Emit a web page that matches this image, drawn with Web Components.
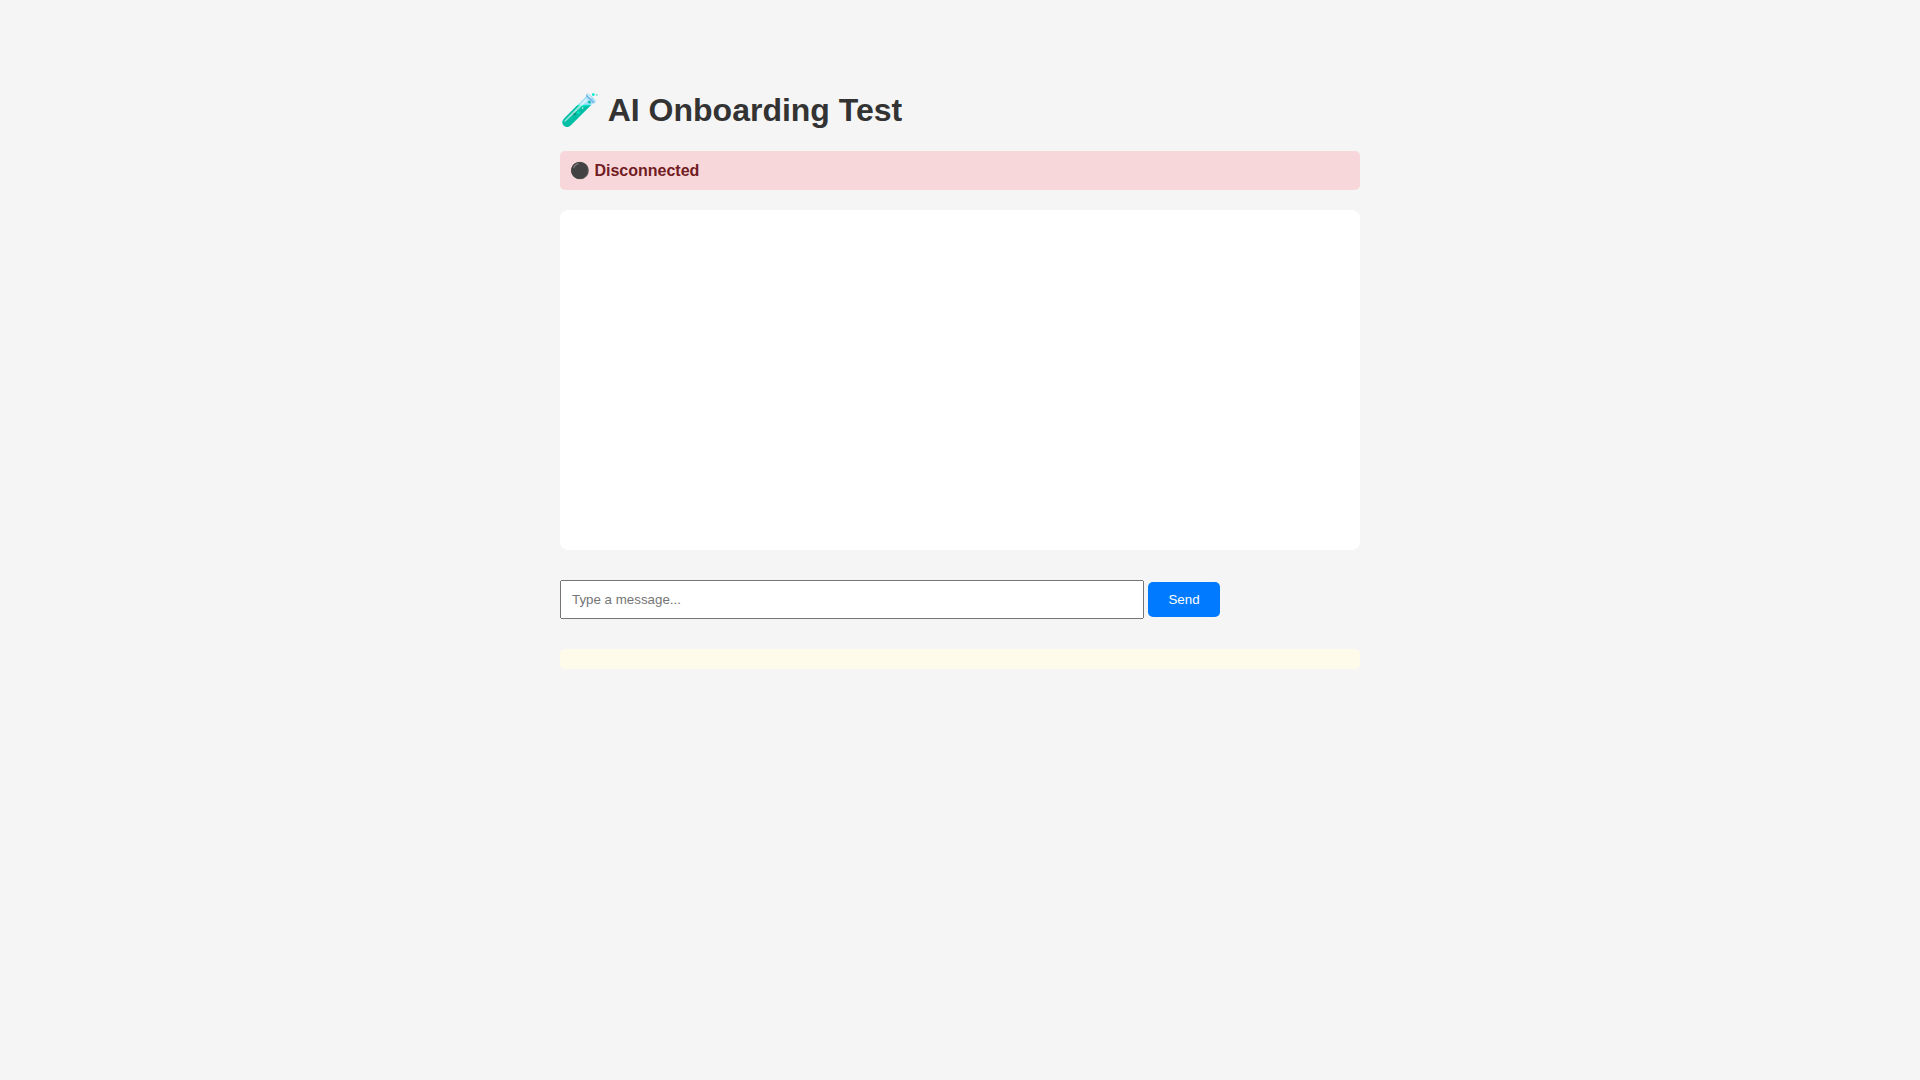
<!DOCTYPE html>
<html lang="en">
<head>
<meta charset="UTF-8">
<title>AI Onboarding Test</title>
<style>
  body {
    font-family: "Liberation Sans", Arial, sans-serif;
    max-width: 800px;
    margin: 50px auto;
    padding: 20px;
    background: #f5f5f5;
  }
</style>
</head>
<body>
<onboarding-test></onboarding-test>

<script>
class ConnectionStatus extends HTMLElement {
  static get observedAttributes() {
    return ['state'];
  }

  constructor() {
    super();
    this.attachShadow({ mode: 'open' });
    this.shadowRoot.innerHTML = `
      <style>
        :host {
          display: block;
          padding: 10px;
          margin: 20px 0;
          border-radius: 5px;
          font-weight: bold;
          background: #f8d7da;
          color: #721c24;
        }
        :host([state="connected"]) {
          background: #d4edda;
          color: #155724;
        }
      </style>
      <span role="status"></span>
    `;
    this._label = this.shadowRoot.querySelector('span');
  }

  attributeChangedCallback(name, oldVal, newVal) {
    this._label.textContent = newVal === 'connected' ? '🟢 Connected' : '⚫ Disconnected';
  }
}

class ChatLog extends HTMLElement {
  constructor() {
    super();
    this.attachShadow({ mode: 'open' });
    this.shadowRoot.innerHTML = `
      <style>
        :host {
          display: block;
          min-height: 300px;
          max-height: 500px;
          padding: 20px;
          margin: 20px 0;
          border-radius: 8px;
          background: white;
          overflow-y: auto;
        }
      </style>
      <slot></slot>
    `;
  }
}

class MessageForm extends HTMLElement {
  constructor() {
    super();
    this.attachShadow({ mode: 'open' });
    this.shadowRoot.innerHTML = `
      <style>
        :host {
          display: block;
          margin: 30px 0;
        }
        input {
          width: 70%;
          padding: 10px;
          font-family: inherit;
        }
        button {
          padding: 10px 20px;
          border: none;
          border-radius: 5px;
          background: #007bff;
          color: white;
          font-family: inherit;
          cursor: pointer;
        }
        button:hover {
          background: #0056b3;
        }
      </style>
      <form>
        <input type="text" placeholder="Type a message..." aria-label="Message">
        <button type="submit">Send</button>
      </form>
    `;
    this._input = this.shadowRoot.querySelector('input');
  }

  connectedCallback() {
    this.shadowRoot.querySelector('form').addEventListener('submit', (e) => {
      e.preventDefault();
      const text = this._input.value.trim();
      if (!text) return;
      this.dispatchEvent(new CustomEvent('send', { detail: text }));
      this._input.value = '';
    });
  }
}

class DebugPanel extends HTMLElement {
  constructor() {
    super();
    this.attachShadow({ mode: 'open' });
    this.shadowRoot.innerHTML = `
      <style>
        :host {
          display: block;
          padding: 10px;
          border-radius: 5px;
          background: #fffbea;
          font-size: 12px;
        }
      </style>
      <slot></slot>
    `;
  }
}

class OnboardingTest extends HTMLElement {
  constructor() {
    super();
    this.attachShadow({ mode: 'open' });
    this.shadowRoot.innerHTML = `
      <style>
        :host {
          display: block;
        }
        h1 {
          color: #333;
        }
      </style>
      <h1>🧪 AI Onboarding Test</h1>
      <connection-status state="disconnected"></connection-status>
      <chat-log></chat-log>
      <message-form></message-form>
      <debug-panel></debug-panel>
    `;
  }

  connectedCallback() {
    const log = this.shadowRoot.querySelector('chat-log');
    this.shadowRoot.querySelector('message-form').addEventListener('send', (e) => {
      const line = document.createElement('p');
      line.textContent = e.detail;
      log.appendChild(line);
    });
  }
}

customElements.define('connection-status', ConnectionStatus);
customElements.define('chat-log', ChatLog);
customElements.define('message-form', MessageForm);
customElements.define('debug-panel', DebugPanel);
customElements.define('onboarding-test', OnboardingTest);
</script>
</body>
</html>
